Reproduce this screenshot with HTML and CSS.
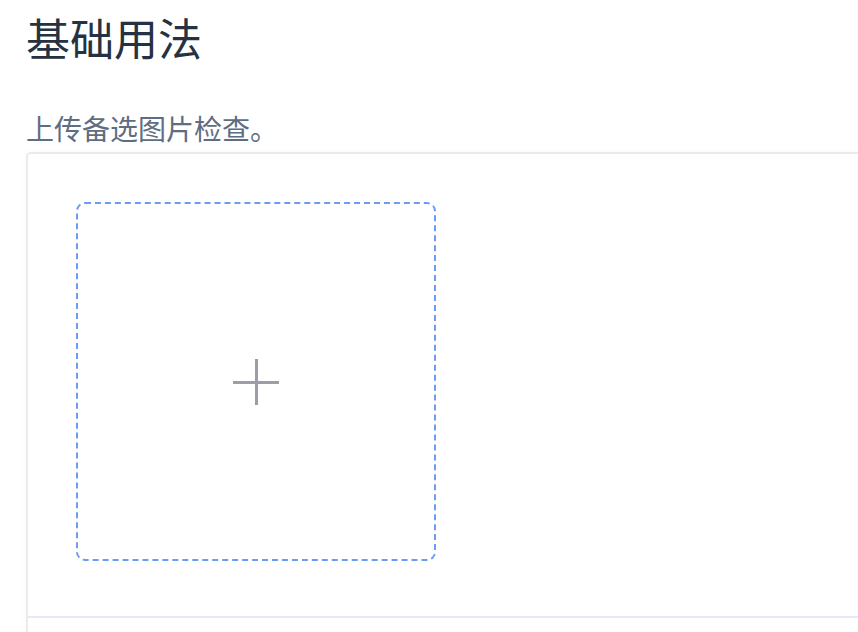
FILE: index.html
```html
<!DOCTYPE html>
<html lang="zh-CN">
<head>
    <meta charset="UTF-8">
    <meta name="viewport" content="width=device-width, initial-scale=1.0">
    <title>基础用法</title>
    <link rel="stylesheet" href="styles.css">
</head>
<body>
    <div class="page">
        <h2 class="title">基础用法</h2>
        <p class="desc">上传备选图片检查。</p>
        <div class="demo-block">
            <div class="demo-source">
                <div class="uploader">
                    <span class="plus"></span>
                </div>
            </div>
            <div class="demo-meta"></div>
        </div>
    </div>
</body>
</html>
```

FILE: styles.css
```css
html, body {
    margin: 0;
    background: #fff;
    overflow: hidden;
}
body {
    font-family: "Noto Sans CJK SC", "Noto Sans", sans-serif;
}
.page {
    padding: 0 0 0 26px;
}
.title {
    margin: 7px 0 0;
    font-size: 44px;
    line-height: 60px;
    font-weight: 400;
    color: #263241;
}
.desc {
    margin: 37px 0 0;
    font-size: 28px;
    line-height: 48px;
    color: #5e6d82;
}
.demo-block {
    width: 900px;
    border: 2px solid #ebebeb;
    border-radius: 5px;
    box-shadow: 0 0 6px rgba(0, 0, 0, 0.03);
}
.demo-source {
    padding: 48px 48px 55px;
}
.uploader {
    width: 356px;
    height: 355px;
    border: 2px dashed #6c9cf2;
    border-radius: 9px;
    display: flex;
    justify-content: center;
    align-items: center;
}
.plus {
    width: 46px;
    height: 46px;
    position: relative;
}
.plus::before,
.plus::after {
    content: "";
    position: absolute;
    background: #9b9ea6;
}
.plus::before {
    left: 0;
    right: 0;
    top: 22px;
    height: 3px;
}
.plus::after {
    top: 0;
    bottom: 0;
    left: 22px;
    width: 3px;
}
.demo-meta {
    border-top: 2px solid #e6e9f5;
    height: 40px;
}
```
